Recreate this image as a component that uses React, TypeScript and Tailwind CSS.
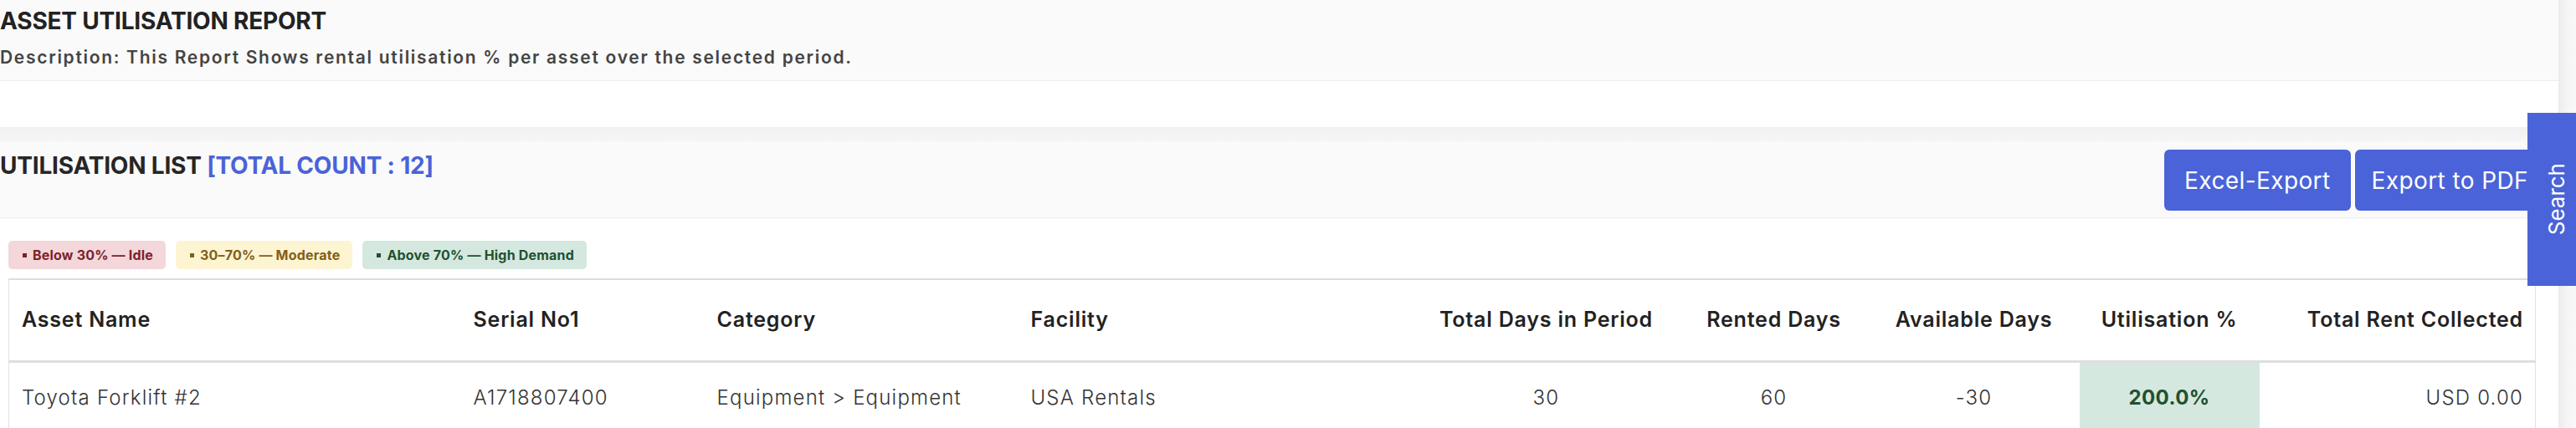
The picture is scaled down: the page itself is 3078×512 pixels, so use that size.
import React from "react";

const font = { fontFamily: "Inter, 'Noto Sans', sans-serif" };

interface Legend {
  label: string;
  className: string;
}

const legends: Legend[] = [
  { label: "Below 30% — Idle", className: "bg-[#f3d7da] text-[#7b2229]" },
  { label: "30–70% — Moderate", className: "bg-[#fdf4d2] text-[#7f6118]" },
  { label: "Above 70% — High Demand", className: "bg-[#d5e8df] text-[#22502f]" },
];

const columns = [
  { label: "Asset Name", width: 540, align: "text-left" },
  { label: "Serial No1", width: 291, align: "text-left" },
  { label: "Category", width: 375, align: "text-left" },
  { label: "Facility", width: 472, align: "text-left" },
  { label: "Total Days in Period", width: 318, align: "text-center" },
  { label: "Rented Days", width: 226, align: "text-center" },
  { label: "Available Days", width: 252, align: "text-center" },
  { label: "Utilisation %", width: 215, align: "text-center" },
  { label: "Total Rent Collected", width: 330, align: "text-right" },
];

export default function App() {
  return (
    <div className="relative flex h-[512px] w-full overflow-hidden bg-white" style={font}>
      <div className="flex-1 min-w-0">
        {/* report header */}
        <div className="h-[97px] border-b border-[#ededf5] bg-[#fafafa] pt-[8px]">
          <h1 className="text-[28px] leading-[34px] font-bold tracking-[-0.2px] text-[#222]">
            ASSET UTILISATION REPORT
          </h1>
          <p className="mt-[13px] text-[21px] leading-[28px] font-semibold tracking-[1.7px] text-[#444]">
            Description: This Report Shows rental utilisation % per asset over the selected period.
          </p>
        </div>

        <div className="h-[55px]" />
        <div className="h-[17px] bg-gradient-to-b from-[#f1f1f1] to-[#f6f6f6]" />

        {/* list toolbar */}
        <div className="flex h-[92px] items-start justify-between border-b border-[#ececec] bg-[#fafafa] pr-[8px]">
          <h2 className="pt-[12px] text-[28px] leading-[34px] font-bold tracking-[-0.2px] text-[#262626]">
            UTILISATION LIST <span className="text-[#4a63d8]">[TOTAL COUNT : 12]</span>
          </h2>
          <div className="flex gap-[5px] pt-[10px]">
            <button className="flex h-[73px] items-center rounded-[6px] bg-[#4a63d8] px-[24px] text-[28px] tracking-[0.4px] text-white">
              Excel-Export
            </button>
            <button className="flex h-[73px] items-center rounded-[6px] bg-[#4a63d8] pl-[20px] pr-[28px] text-[28px] tracking-[0.4px] text-white">
              Export to PDF
            </button>
          </div>
        </div>

        {/* legend */}
        <div className="mt-[27px] flex gap-[12px] pl-[10px]">
          {legends.map((l) => (
            <span
              key={l.label}
              className={`flex h-[34px] items-center rounded-[5px] pl-[17px] pr-[15px] text-[16px] font-bold tracking-[0.2px] ${l.className}`}
            >
              <span className="mr-[7px] inline-block h-[5px] w-[5px] bg-current" />
              {l.label}
            </span>
          ))}
        </div>

        {/* table */}
        <table className="mt-[11px] ml-[10px] w-[3019px] table-fixed border-collapse border-t-2 border-x border-t-[#dcdcdc] border-x-[#e2e2e2]">
          <colgroup>
            {columns.map((c) => (
              <col key={c.label} style={{ width: c.width }} />
            ))}
          </colgroup>
          <thead>
            <tr className="h-[98px] border-b-[3px] border-[#dedede]">
              {columns.map((c) => (
                <th
                  key={c.label}
                  className={`px-[15px] text-[25px] font-semibold tracking-[0.8px] text-[#222] ${c.align} last:pr-[14px]`}
                >
                  {c.label}
                </th>
              ))}
            </tr>
          </thead>
          <tbody>
            <tr className="h-[86px] text-[24px] font-light tracking-[1.2px] text-[#333]">
              <td className="px-[15px]">Toyota Forklift #2</td>
              <td className="px-[15px]">A1718807400</td>
              <td className="px-[15px]">Equipment &gt; Equipment</td>
              <td className="px-[15px]">USA Rentals</td>
              <td className="px-[15px] text-center">30</td>
              <td className="px-[15px] text-center">60</td>
              <td className="px-[15px] text-center">-30</td>
              <td className="bg-[#d5e8df] px-[15px] text-center font-bold tracking-[0.4px] text-[#22502f]">200.0%</td>
              <td className="pl-[15px] pr-[14px] text-right">USD 0.00</td>
            </tr>
          </tbody>
        </table>
      </div>

      {/* page scrollbar track */}
      <div className="h-full w-[21px] shrink-0 bg-gradient-to-r from-[#ebebeb] via-[#f5f5f5] to-[#f8f8f8]" />

      {/* floating search tab */}
      <button className="absolute right-0 top-[135px] flex h-[207px] w-[58px] items-center justify-center bg-[#4a63d8] pl-[10px] text-[26px] text-white">
        <span className="rotate-180 [writing-mode:vertical-rl]">Search</span>
      </button>
    </div>
  );
}
